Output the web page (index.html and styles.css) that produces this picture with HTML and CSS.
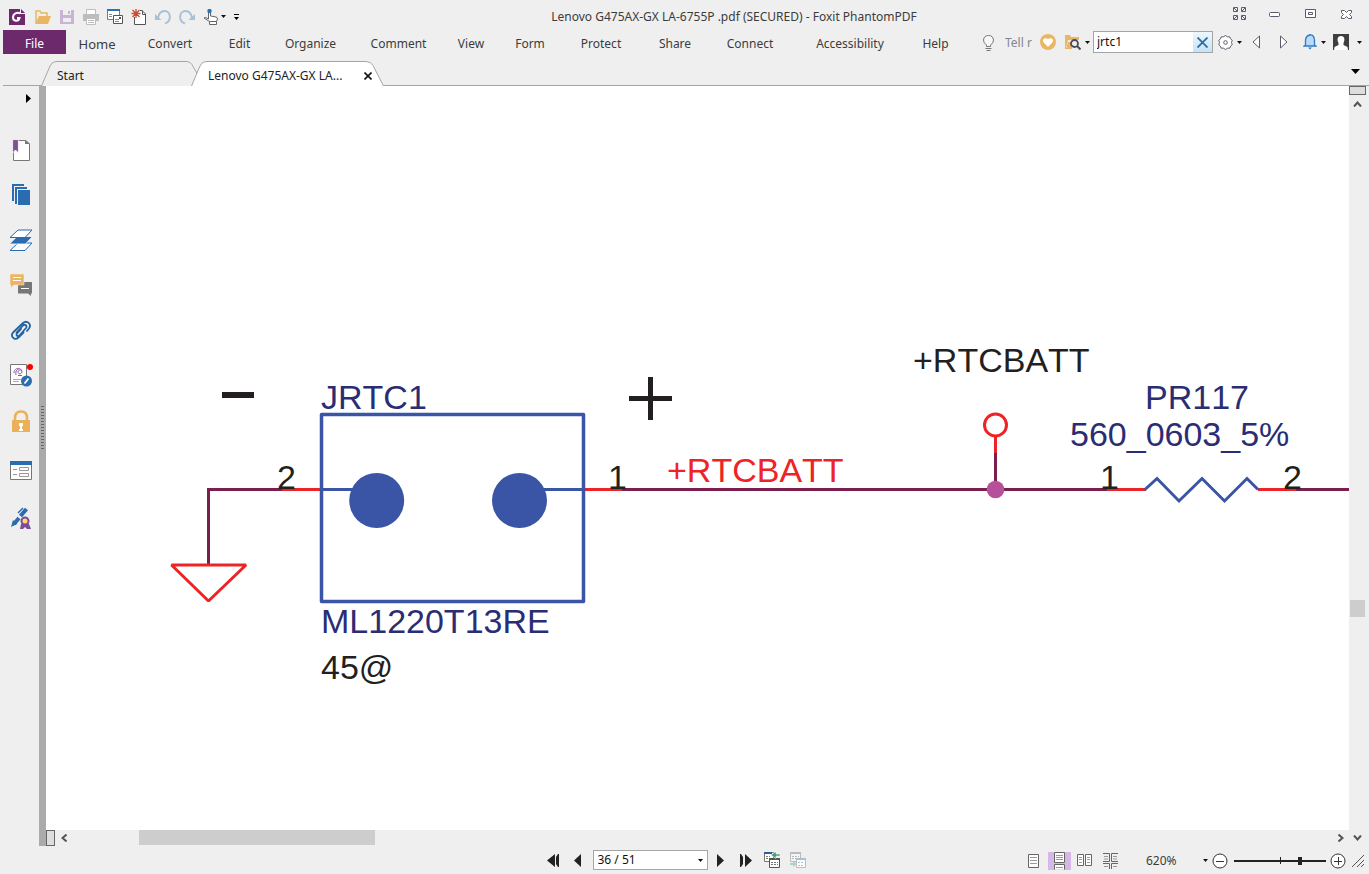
FILE: index.html
```html
<!DOCTYPE html>
<html lang="en">
<head>
<meta charset="utf-8">
<title>Lenovo G475AX-GX LA-6755P .pdf (SECURED) - Foxit PhantomPDF</title>
<link rel="stylesheet" href="styles.css">
</head>
<body>
<div class="app">
  <header class="titlebar">
    <div class="quick">
      <button class="icon app-icon" aria-label="Foxit PhantomPDF"><svg width="16" height="16" viewBox="0 0 16 16"><path fill="#6c2a6c" d="M0 0h11v5h5v11H0z"/><path fill="#6c2a6c" d="M12 0l4 4h-4z"/><path fill="none" stroke="#fff" stroke-width="2" d="M11.500 4.500C8 2.500 4 5 4 8.500c0 4 5.500 4.500 6.500 .5H8"/></svg></button>
      <button class="icon" aria-label="Open"><svg width="16" height="16" viewBox="0 0 16 16"><path fill="none" stroke="#ebb664" stroke-width="1.500" d="M1 14V2h4l1 2h6v3"/><path fill="#ebb664" d="M4 7h12l-3 8H0z"/></svg></button>
      <button class="icon" aria-label="Save"><svg width="16" height="16" viewBox="0 0 16 16"><path fill="#c8b4d4" d="M1 1h14v14H1z"/><path fill="#efefef" d="M4 1h8v5H4zM4 9h8v4H4z"/><path fill="#c8b4d4" d="M9 2h2v3H9z"/></svg></button>
      <button class="icon" aria-label="Print"><svg width="16" height="16" viewBox="0 0 16 16"><path fill="#fff" stroke="#bdbdbd" d="M3.500 5V.5h9V5"/><path fill="#bdbdbd" d="M0 5h16v7H0z"/><path fill="#a9c4dc" d="M1 8h14v2H1z"/><path fill="#fff" stroke="#bdbdbd" d="M3.500 9.500h9v6h-9z"/><path stroke="#bdbdbd" d="M5 11.500h6M5 13.500h6"/></svg></button>
      <button class="icon" aria-label="Email"><svg width="16" height="16" viewBox="0 0 16 16"><path fill="#fff" stroke="#5b7fb0" d="M.5.5h12v10H.5z"/><path fill="#2f6fb3" d="M0 0h13v2H0z"/><path stroke="#888" d="M2 5.500h3M2 7.500h3"/><path fill="#fff" stroke="#555" d="M6.500 6.500h9v8h-9z"/><path stroke="#888" d="M8 10.500h4M8 12.500h4"/><path stroke="#555" stroke-width="2" d="M12 9h2"/></svg></button>
      <button class="icon" aria-label="New"><svg width="16" height="16" viewBox="0 0 16 16"><path fill="#fff" stroke="#555" d="M3.500 8v7.500h11V5L11 1.500H9"/><path fill="none" stroke="#555" d="M11.500 1.500v4h3"/><path stroke="#cf4a32" stroke-width="1.300" d="M5 0v9M.5 4.500h9M1.500 1l7 7M8.500 1l-7 7"/></svg></button>
      <button class="icon" aria-label="Undo"><svg width="16" height="16" viewBox="0 0 16 16"><path fill="none" stroke="#a9c0d8" stroke-width="2" d="M3 9C4 3 7 2 9.500 2c6.500 0 7.500 10 .5 12.500"/><path fill="#a9c0d8" d="M0 5v6h6.500z"/></svg></button>
      <button class="icon" aria-label="Redo"><svg width="16" height="16" viewBox="0 0 16 16"><path fill="none" stroke="#a9c0d8" stroke-width="2" d="M13 9C12 3 9 2 6.500 2 0 2-1 12 6 14.500"/><path fill="#a9c0d8" d="M16 5v6H9.500z"/></svg></button>
      <button class="icon hand" aria-label="Hand"><svg width="16" height="16" viewBox="0 0 16 16"><path fill="#fff" stroke="#666" d="M5.500 10V3q1-1.500 2 0v4l5.500 1q1.500.5 1.500 2l-1 2.500H6.500L1 9q1-1.500 4.500 1z"/><path fill="#fff" stroke="#666" d="M6.500 12.500h7v3h-7z"/><circle cx="6.500" cy="2" r="2.200" fill="#2f6fb3"/></svg></button>
      <svg class="caret" width="5" height="3" viewBox="0 0 5 3"><path d="M0 0h5L2.500 3z"/></svg>
      <button class="icon" aria-label="Customize toolbar"><svg width="5" height="6" viewBox="0 0 5 6"><path d="M0 0h5v1H0zM0 3h5L2.500 6z"/></svg></button>
    </div>
    <h1 class="title">Lenovo G475AX-GX LA-6755P .pdf (SECURED) - Foxit PhantomPDF</h1>
    <div class="window-buttons">
      <button class="icon" aria-label="Full screen"><svg width="14" height="14" viewBox="0 0 14 14"><path fill="none" stroke="#5b5b6e" d="M.5.5h4v4h-4zM8.500.5h4v4h-4zM.5 8.500h4v4h-4zM8.500 8.500h4v4h-4zM1 1l3 3M12 1L9 4M1 12l3-3M12 12L9 9"/></svg></button>
      <button class="icon" aria-label="Minimize"><svg width="12" height="14" viewBox="0 0 12 14"><rect x=".5" y="5.500" width="10" height="4" rx="1" fill="#fff" stroke="#5b5b6e"/></svg></button>
      <button class="icon" aria-label="Restore"><svg width="12" height="14" viewBox="0 0 12 14"><path fill="#fff" stroke="#5b5b6e" d="M.5 2.500h10v8H.5zM3.500 5.500h4v2h-4z"/></svg></button>
      <button class="icon" aria-label="Close"><svg width="12" height="14" viewBox="0 0 12 14"><path fill="#fff" stroke="#5b5b6e" d="M.5 3.500h3l2 2 2-2h3v2l-2 2 2 2v2h-3l-2-2-2 2h-3v-2l2-2-2-2z"/></svg></button>
    </div>
  </header>

  <div class="ribbon">
    <nav class="menu">
      <button class="file">File</button>
      <button class="home">Home</button>
      <button>Convert</button>
      <button>Edit</button>
      <button>Organize</button>
      <button>Comment</button>
      <button>View</button>
      <button>Form</button>
      <button>Protect</button>
      <button>Share</button>
      <button>Connect</button>
      <button>Accessibility</button>
      <button>Help</button>
    </nav>
    <div class="tools">
      <label class="tell"><svg width="13" height="16" viewBox="0 0 13 16"><path fill="#f8f8f8" stroke="#777" d="M4.500 11.500V10Q1.500 8 1.500 5q.5-4.500 5-4.500t5 4.500q0 3-3 5v1.500zM3.500 13.500h6M4.500 15.500h4"/></svg><input class="tell-input" aria-label="Tell me" value="Tell r"></label>
      <button class="icon heart" aria-label="Favorite"><svg width="16" height="16" viewBox="0 0 16 16"><circle cx="8" cy="8" r="8" fill="#ebb664"/><path fill="#fff" d="M8 13L3.500 8.300C1.500 5.500 5.500 2.800 8 5.300c2.500-2.500 6.500.2 4.500 3z"/></svg></button>
      <button class="icon" aria-label="Search folder"><svg width="16" height="15" viewBox="0 0 16 15"><path fill="#ebb664" d="M0 0h5l1 2h8v3H3l-2 8h5v1H0z"/><path fill="#ebb664" d="M3 7h4v7H1z"/><circle cx="9.500" cy="8.500" r="3.500" fill="#eee" stroke="#4b4b55" stroke-width="1.800"/><path stroke="#4b4b55" stroke-width="2" d="M12 11l3.500 3.500"/></svg></button>
      <svg class="caret" width="5" height="3" viewBox="0 0 5 3"><path d="M0 0h5L2.500 3z"/></svg>
      <div class="search"><input class="search-input" aria-label="Find" value="jrtc1"><button class="clear" aria-label="Clear"><svg width="11" height="11" viewBox="0 0 11 11"><path stroke="#2d6da5" stroke-width="1.800" d="M.5.5l10 10M10.500.5l-10 10"/></svg></button></div>
      <button class="icon" aria-label="Settings"><svg width="15" height="15" viewBox="0 0 15 15"><path fill="#fff" stroke="#5b5b6e" d="M5.500 1.800Q7.500-.8 9.500 1.800 12.700 1 12.500 3.800 15.500 5 13.500 7.500 15.500 10 12.500 11.200 12.700 14 9.500 13.200 7.500 15.800 5.500 13.200 2.300 14 2.500 11.200-.5 10 1.500 7.500-.5 5 2.500 3.800 2.300 1 5.500 1.800z"/><circle cx="7.500" cy="7.500" r="1.800" fill="#fff" stroke="#5b5b6e"/></svg></button>
      <svg class="caret gear-caret" width="5" height="3" viewBox="0 0 5 3"><path d="M0 0h5L2.500 3z"/></svg>
      <button class="icon" aria-label="Previous result"><svg width="9" height="14" viewBox="0 0 9 14"><path fill="#fff" stroke="#5b5b6e" d="M7.500 1v12L1 7z"/></svg></button>
      <button class="icon next" aria-label="Next result"><svg width="9" height="14" viewBox="0 0 9 14"><path fill="#fff" stroke="#5b5b6e" d="M1.500 1v12L8 7z"/></svg></button>
      <button class="icon" aria-label="Notifications"><svg width="14" height="16" viewBox="0 0 14 16"><path fill="#b7dbf8" stroke="#2f7bbd" stroke-width="1.300" d="M2.500 11V6Q3 1.500 7 1t4.500 5v5l1.500 1H1z"/><path fill="#2f7bbd" d="M5 13.500h4L7 15.500zM6.500 0h1v1h-1z"/></svg></button>
      <svg class="caret" width="5" height="3" viewBox="0 0 5 3"><path d="M0 0h5L2.500 3z"/></svg>
      <button class="icon avatar" aria-label="Account"><svg width="16" height="16" viewBox="0 0 16 16"><path fill="#3f3f3f" d="M0 0h16v16H0z"/><path fill="#fff" d="M8 2c4 0 4 4 2.500 7v2l4 2 .5 3H1l.5-3 4-2V9C4 6 4 2 8 2z"/></svg></button>
      <svg class="caret" width="5" height="3" viewBox="0 0 5 3"><path d="M0 0h5L2.500 3z"/></svg>
    </div>
  </div>

  <div class="tabs">
    <button class="tab start"><svg class="tab-shape" width="158" height="25" viewBox="0 0 158 25"><path fill="#efefef" stroke="#a5a5a5" d="M.5 25L9 5Q11 .5 15 .5h130q5 0 7 5L157 14v11"/></svg><span>Start</span></button>
    <div class="tab current"><svg class="tab-shape" width="193" height="25" viewBox="0 0 193 25"><path fill="#fff" stroke="#a5a5a5" d="M.5 25L9 5Q11 .5 15 .5h160q5 0 7 4L192.500 25"/></svg><span>Lenovo G475AX-GX LA...</span><button class="close" aria-label="Close tab"><svg width="8" height="8" viewBox="0 0 8 8"><path stroke="#111" stroke-width="1.600" d="M.5.5l7 7M7.500.5l-7 7"/></svg></button></div>
    <button class="icon tab-list" aria-label="Tab list"><svg width="9" height="5" viewBox="0 0 9 5"><path d="M0 0h9L4.500 5z"/></svg></button>
  </div>

  <main class="workspace">
    <aside class="sidebar">
      <button class="expand" aria-label="Expand panel"><svg width="5" height="9" viewBox="0 0 5 9"><path d="M0 0v9l5-4.500z"/></svg></button>
      <button class="panel" aria-label="Bookmarks"><svg width="22" height="22" viewBox="0 0 22 22"><path fill="#fff" stroke="#777" d="M3.500 1.500H16L19.500 5v16.500h-16z"/><path fill="#777" d="M15 1v4h5z"/><path fill="#7c5295" stroke="#fff" stroke-width=".8" d="M2.600.6H8.400V14L5.500 11 2.600 14z"/></svg></button>
      <button class="panel" aria-label="Pages"><svg width="22" height="22" viewBox="0 0 22 22"><path fill="#2b6cb0" d="M2 0h12v2H4v15H2zM5 3h12v2H7v15H5zM8 6h12v15H8z"/></svg></button>
      <button class="panel" aria-label="Layers"><svg width="24" height="22" viewBox="0 0 24 22"><path fill="#fff" stroke="#2b6cb0" d="M9 14h14l-7 7.500H1z"/><path fill="#2b6cb0" stroke="#fff" stroke-width=".8" d="M8 7.500h15.500l-7 7.500H.5z"/><path fill="#fff" stroke="#2b6cb0" d="M9 1h14l-7 7.500H1z"/></svg></button>
      <button class="panel" aria-label="Comments"><svg width="22" height="22" viewBox="0 0 22 22"><path fill="#777" d="M8 8h14v11.500h-1V22l-3-2.500H8z"/><path stroke="#fff" d="M11 14.500h8"/><path fill="#ebb664" stroke="#efefef" stroke-width=".5" d="M0 0h14v11H4l-3 3v-3H0z"/><path stroke="#fff" d="M3 3.500h8M3 6.500h8"/></svg></button>
      <button class="panel" aria-label="Attachments"><svg width="22" height="22" viewBox="0 0 22 22"><path fill="none" stroke="#2463a0" stroke-width="1.800" stroke-linecap="round" d="M6.500 13.500l6.500-7c2-2 4.500.5 3 2.500l-6.500 7.500c-1.500 1.500-4 0-2.500-2l4-4.500M17 12l2-2.500c3-4-2-9-6-5.500L3.500 13c-4 4 1 9 5 5.500l5-5"/></svg></button>
      <button class="panel" aria-label="Signatures"><svg width="24" height="24" viewBox="0 0 24 24"><path fill="#fff" stroke="#777" d="M1.500 1.500h16v20h-16z"/><path fill="none" stroke="#8a5ca0" d="M5 10c0-6 8-6 8-1-1 3-4 2-4 0s3-3 4-1M7 12c-1-5 2-6 3-6M9 12.500h4"/><path stroke="#aaa" d="M4 16.500h8M4 18.500h6"/><circle cx="17.500" cy="18" r="5.500" fill="#2b6cb0"/><path stroke="#fff" stroke-width="1.800" d="M15.500 20.500l4-5"/><circle cx="21" cy="4" r="3" fill="#f00"/></svg></button>
      <button class="panel tall" aria-label="Security"><svg width="20" height="23" viewBox="0 0 20 23"><path fill="none" stroke="#ebb05a" stroke-width="2.500" d="M4 11V8q0-6.500 6-6.500T16 8v3"/><path fill="#ebb05a" d="M1 10h18v12H1z"/><path fill="#fff" d="M8 13h4v3h-1v3h1v2H8v-2h1v-3H8z"/></svg></button>
      <button class="panel tall" aria-label="Fields"><svg width="22" height="20" viewBox="0 0 22 20"><path fill="#fff" stroke="#777" d="M.5.5h21v18H.5z"/><path fill="#2b6cb0" d="M0 0h22v4H0z"/><path fill="none" stroke="#999" d="M9.500 6.500h9v3h-9zM9.500 12.500h9v3h-9zM3 8.500h4M3 13.500h4"/></svg></button>
      <button class="panel" aria-label="Digital signatures"><svg width="22" height="24" viewBox="0 0 22 24"><path stroke="#2b6cb0" stroke-width="4" d="M4 18l5-6M10.500 10l6-7"/><path fill="#2b6cb0" d="M3 14l4 4-6 3z"/><path stroke="#2b6cb0" stroke-width="1.500" d="M8 7l5-5"/><path fill="#7c4c9b" d="M11 18l-1 5h3l2-2 2 2h4l-2-5z"/><circle cx="15" cy="15" r="3.500" fill="#ffd76b" stroke="#7c4c9b" stroke-width="2"/></svg></button>
    </aside>
    <div class="splitter"></div>
    <section class="document">
      <svg class="schematic" width="1304" height="744" viewBox="46 86 1304 744" role="img" aria-label="Schematic page 36">
        <g fill="none" stroke-width="3">
          <path stroke="#7b1d4d" d="M208.500 565V489.500H286M622 489.500h486M1296 489.500h54M995.500 453v36"/>
          <path stroke="#ee2326" d="M282 489.500h40M583 489.500h39M1107 489.500h39M1258 489.500h38M995.500 436v17"/>
          <path stroke="#ee2326" stroke-linejoin="bevel" d="M171.500 565h74.500L208.500 601z"/>
          <circle stroke="#ee2326" cx="995.500" cy="425" r="11"/>
          <path stroke="#3a54a6" d="M321.500 489.500h56M520 489.500h63M1145 489.500l12-11 22 22.500 23-22.500 22.500 22.500 22.500-22.500 11 11"/>
          <path stroke="#3a54a6" stroke-width="3.500" stroke-linejoin="round" d="M321.500 414.500h262v187h-262z"/>
        </g>
        <circle fill="#3a54a6" cx="376.700" cy="500.500" r="27.500"/>
        <circle fill="#3a54a6" cx="519.500" cy="500.500" r="27.500"/>
        <circle fill="#b7509b" cx="995.500" cy="489.500" r="8.800"/>
        <path fill="#231f20" d="M222 392h32v6h-32zM629 396h43v5h-43zM648 377h5v43h-5z"/>
        <g class="mark-blue">
          <text x="321" y="409">JRTC1</text>
          <text x="321" y="633">ML1220T13RE</text>
          <text x="1145" y="409">PR117</text>
          <text x="1070" y="446">560_0603_5%</text>
        </g>
        <g class="mark-black">
          <text x="321" y="679">45@</text>
          <text x="277" y="489">2</text>
          <text x="608" y="489">1</text>
          <text x="913" y="372">+RTCBATT</text>
          <text x="1100" y="489">1</text>
          <text x="1283" y="489">2</text>
        </g>
        <text class="mark-red" x="667" y="482">+RTCBATT</text>
      </svg>
    </section>
    <div class="vscroll">
      <span class="split-box"></span>
      <button class="arrow" aria-label="Scroll up"><svg width="9" height="6" viewBox="0 0 9 6"><path fill="none" stroke="#555" stroke-width="2" d="M1 5.500l3.500-4 3.500 4"/></svg></button>
      <div class="vtrack"><span class="vthumb"></span></div>
      <button class="arrow" aria-label="Scroll down"><svg width="9" height="6" viewBox="0 0 9 6"><path fill="none" stroke="#555" stroke-width="2" d="M1 .5l3.500 4 3.500-4"/></svg></button>
    </div>
    <div class="hscroll">
      <span class="split-box"></span>
      <button class="arrow" aria-label="Scroll left"><svg width="6" height="8" viewBox="0 0 6 8"><path fill="none" stroke="#555" stroke-width="2" d="M5.500.5L1.500 4l4 3.500"/></svg></button>
      <div class="htrack"><span class="hthumb"></span></div>
      <button class="arrow" aria-label="Scroll right"><svg width="6" height="8" viewBox="0 0 6 8"><path fill="none" stroke="#555" stroke-width="2" d="M.5.5l4 3.500-4 3.500"/></svg></button>
    </div>
  </main>

  <footer class="status">
    <div class="pager">
      <button class="icon" aria-label="First page"><svg width="13" height="13" viewBox="0 0 13 13"><path fill="#222" d="M8 0v13L0 6.500zM12 0v13H11L9 10V3l2-3z"/></svg></button>
      <button class="icon step-back" aria-label="Previous page"><svg width="8" height="13" viewBox="0 0 8 13"><path fill="#222" d="M7 0v13L0 6.500z"/></svg></button>
      <div class="page-box"><select aria-label="Page"><option>36 / 51</option></select><svg class="caret" width="5" height="3" viewBox="0 0 5 3"><path d="M0 0h5L2.500 3z"/></svg></div>
      <button class="icon" aria-label="Next page"><svg width="8" height="13" viewBox="0 0 8 13"><path fill="#222" d="M0 0v13l7-6.500z"/></svg></button>
      <button class="icon last" aria-label="Last page"><svg width="13" height="13" viewBox="0 0 13 13"><path fill="#222" d="M5 0v13l7-6.500zM0 0v13h1l2-3V3L1 0z"/></svg></button>
      <button class="icon" aria-label="Previous view"><svg width="16" height="16" viewBox="0 0 16 16"><path fill="#fff" stroke="#777" d="M.5.5h9v9h-9z"/><path fill="#2b5f95" d="M0 0h8v2H0z"/><path stroke="#777" stroke-dasharray="2 1" d="M2 4.500h4M2 6.500h3"/><path fill="#fff" stroke="#555" d="M5.500 6.500h10v9h-10z"/><path fill="#555" d="M5 6h11v2H5z"/><path stroke="#777" stroke-dasharray="2 1" d="M7 10.500h7M7 12.500h7"/><path fill="#3f9f7b" stroke="#efefef" stroke-width=".6" d="M7 3l5-3.500V2h4v2h-4v2.500z"/></svg></button>
      <button class="icon next-view" aria-label="Next view"><svg width="16" height="16" viewBox="0 0 16 16"><path fill="#f4f4f4" stroke="#bbb" d="M.5.5h10v9H.5z"/><path fill="#bbb" d="M0 0h11v2H0z"/><path stroke="#bbb" stroke-dasharray="2 1" d="M2 4.500h7M2 6.500h5"/><path fill="#fff" stroke="#bbb" d="M6.500 6.500h9v9h-9z"/><path fill="#a3c0de" d="M6 6h10v2H6z"/><path stroke="#bbb" stroke-dasharray="2 1" d="M8 10.500h6M8 13.500h6"/><path fill="#a9d4c3" d="M7 12l-4-3v2H0v2h3v2z"/></svg></button>
    </div>
    <div class="zoom">
      <button class="icon mode" aria-label="Single page"><svg width="12" height="14" viewBox="0 0 12 14"><path fill="#fff" stroke="#666" d="M.5.5h10v13H.5z"/><path stroke="#999" d="M2 3.500h7M2 6.500h7M2 9.500h7"/></svg></button>
      <button class="icon mode on" aria-label="Continuous"><svg width="12" height="18" viewBox="0 0 12 18"><path fill="#fff" stroke="#666" d="M.5.500h10v10H.5zM.5 17.500v-5h10v5"/><path stroke="#999" d="M2 3.500h7M2 5.500h7M2 7.500h7M2 15.500h7"/></svg></button>
      <button class="icon mode facing" aria-label="Facing"><svg width="16" height="13" viewBox="0 0 16 13"><path fill="#fff" stroke="#666" d="M.5.5h6v11h-6zM8.500.5h6v11h-6z"/><path stroke="#999" d="M2 3.500h3M2 5.500h3M2 8.500h3M10 3.500h3M10 5.500h3M10 8.500h3"/></svg></button>
      <button class="icon mode" aria-label="Continuous facing"><svg width="16" height="16" viewBox="0 0 16 16"><path fill="none" stroke="#666" d="M0 .5h6.500v8H0M15 .5H8.500v8H15M0 10.500h6.500V16M15 10.500H8.500V16"/><path stroke="#999" d="M1 3.500h4M1 6h4M10 3.500h4M10 6h4M1 13.500h4M10 13.500h4"/></svg></button>
      <button class="level">620%<svg class="caret" width="5" height="3" viewBox="0 0 5 3"><path d="M0 0h5L2.500 3z"/></svg></button>
      <button class="icon" aria-label="Zoom out"><svg width="16" height="16" viewBox="0 0 16 16"><circle cx="8" cy="8" r="7" fill="#fff" stroke="#333"/><path stroke="#333" d="M4 8.500h8"/></svg></button>
      <input class="slider" type="range" aria-label="Zoom" min="0" max="100" value="73">
      <button class="icon" aria-label="Zoom in"><svg width="16" height="16" viewBox="0 0 16 16"><circle cx="8" cy="8" r="7" fill="#fff" stroke="#333"/><path stroke="#333" d="M4 8.500h8M8.500 4v8"/></svg></button>
      <svg class="grip" width="13" height="12" viewBox="0 0 13 12"><path stroke="#555" d="M0 12L12 0M5 12l7-7M9 12l3-3"/></svg>
    </div>
  </footer>
</div>
</body>
</html>
```
FILE: styles.css
```css
* { box-sizing: border-box; }
body { margin: 0; background: #efefef; color: #3c3c3c; font: 12px/16px "Noto Sans", "Open Sans", sans-serif; }
button, input, select { margin: 0; padding: 0; border: 0; border-radius: 0; background: none; color: inherit; font: inherit; }
svg { display: block; flex: none; }
.app { display: flex; flex-direction: column; height: 100vh; overflow: hidden; }
.icon { display: flex; flex: none; align-items: center; justify-content: center; }
.caret { fill: #111; }

.titlebar { display: flex; flex: none; height: 30px; }
.quick { display: flex; align-items: center; gap: 8px; width: 240px; padding: 3px 0 0 9px; }
.app-icon { padding-right: 2px; }
.hand { margin-right: -6px; }
.title { flex: 1; margin: 0; padding-top: 9px; text-align: center; font-size: 12px; font-weight: 400; line-height: 16px; }
.window-buttons { display: flex; width: 141px; padding-left: 5px; overflow: hidden; }
.window-buttons .icon { width: 36px; height: 28px; justify-content: flex-start; }

.ribbon { display: flex; flex: none; justify-content: space-between; height: 27px; padding-left: 3px; }
.menu { display: grid; grid-template-columns: 63px 62px 84px 55px 87px 89px 56px 62px 80px 68px 82px 118px 53px; height: 24px; }
.menu button { padding-top: 4px; white-space: nowrap; }
.menu .home { font-size: 13px; }
.menu .file { background: #6c2a6c; color: #fff; }
.tools { display: flex; align-items: center; height: 24px; padding-right: 7px; }
.tell { display: flex; align-items: center; gap: 10px; padding-top: 2px; color: #858590; }
.tell-input { width: 29px; }
.heart { margin: 0 9px 0 6px; }
.tools .caret { margin-left: 4px; }
.search { display: flex; width: 120px; height: 22px; margin: 0 5px 0 3px; border: 1px solid #a5a5a5; background: #fff; }
.search-input { flex: 1; min-width: 0; padding-left: 3px; color: #111; }
.clear { display: flex; align-items: center; justify-content: center; width: 19px; background: linear-gradient(#eef7fd, #c4e3f8); }
.tools .gear-caret { margin: 0 10px 0 4px; }
.next { margin: 0 15px 0 18px; }
.avatar { margin: 0 4px 0 7px; }

.tabs { display: flex; flex: none; height: 29px; margin-left: 3px; padding: 4px 0 0 38px; border-bottom: 1px solid #a5a5a5; }
.tab { position: relative; display: flex; flex: none; align-items: center; height: 25px; padding: 4px 0 0 16px; color: #222; }
.tab-shape { position: absolute; top: 0; left: 0; }
.tab span { position: relative; flex: 1; text-align: left; white-space: nowrap; }
.start { width: 150px; }
.current { width: 193px; padding-left: 17px; }
.close { position: relative; margin-right: 12px; padding-top: 1px; }
.tab-list { margin: 0 9px 4px auto; }

.workspace { display: grid; flex: 1; grid-template: minmax(0, 1fr) 16px / 39px 7px minmax(0, 1fr) 20px; min-height: 0; }
.sidebar { display: flex; flex-direction: column; grid-row: 1 / 3; }
.expand { display: flex; justify-content: flex-end; height: 41px; padding: 8px 8px 0 0; }
.panel { display: flex; flex: none; align-items: center; justify-content: center; height: 45px; padding-left: 2px; }
.tall { height: 49px; }
.splitter { display: flex; align-items: center; justify-content: center; grid-row: 1 / 3; background: #ababab; }
.splitter::after { width: 3px; height: 44px; margin-bottom: 76px; background: repeating-linear-gradient(#666 0 1px, transparent 1px 3px); content: ""; }
.document { overflow: hidden; background: #fff; }
.schematic text { font: 34px "Liberation Sans", Arial, sans-serif; font-kerning: none; }
.mark-blue { fill: #2b2d74; }
.mark-black { fill: #231f20; }
.mark-red { fill: #ee2326; }
.split-box { flex: none; border: 1px solid #666; background: #ddd; }
.arrow { display: flex; flex: none; align-items: center; justify-content: center; }
.vscroll { display: flex; flex-direction: column; grid-area: 1 / 4 / 3 / 5; width: 17px; }
.vscroll .split-box { height: 9px; }
.vscroll .arrow { height: 17px; }
.vtrack { flex: 1; padding-left: 1px; }
.vtrack::before { display: block; height: 68%; content: ""; }
.vthumb { display: block; width: 15px; height: 17px; background: #cdcdcd; }
.hscroll { display: flex; grid-area: 2 / 3; }
.hscroll .split-box { width: 9px; }
.hscroll .arrow { width: 17px; height: 15px; }
.htrack { flex: 1; padding-left: 67px; }
.hthumb { display: block; width: 236px; height: 15px; background: #cdcdcd; }

.status { display: grid; flex: none; grid-template-columns: 1fr auto 1fr; align-items: center; height: 28px; }
.pager { display: flex; grid-column: 2; align-items: center; padding-right: 17px; }
.step-back { margin: 0 11px 0 14px; }
.page-box { display: grid; align-items: center; width: 115px; height: 20px; margin-right: 9px; border: 1px solid #a5a5a5; background: #fff; }
.page-box > * { grid-area: 1 / 1; }
.page-box select { width: 100%; height: 18px; padding-left: 4px; appearance: none; color: #111; }
.page-box .caret { justify-self: end; margin-right: 4px; pointer-events: none; }
.last { margin: 0 11px 0 15px; }
.next-view { margin-left: 10px; }
.zoom { display: flex; align-items: center; justify-content: flex-end; padding: 1px 4px 0 0; }
.mode { height: 18px; }
.mode.on { width: 23px; margin: 0 6px 0 8px; background: #d6b8e8; }
.facing { margin-right: 10px; }
.level { display: flex; align-items: center; justify-content: space-between; width: 62px; margin: 0 4px 0 27px; }
.slider { width: 92px; height: 10px; margin: 0 4px 0 6px; appearance: none; background: linear-gradient(#222, #222) 50% 50% / 1px 7px no-repeat, linear-gradient(#222, #222) 0 50% / 100% 2px no-repeat; }
.slider::-webkit-slider-thumb { width: 4px; height: 8px; appearance: none; background: #222; }
.grip { margin-left: 6px; }
```
